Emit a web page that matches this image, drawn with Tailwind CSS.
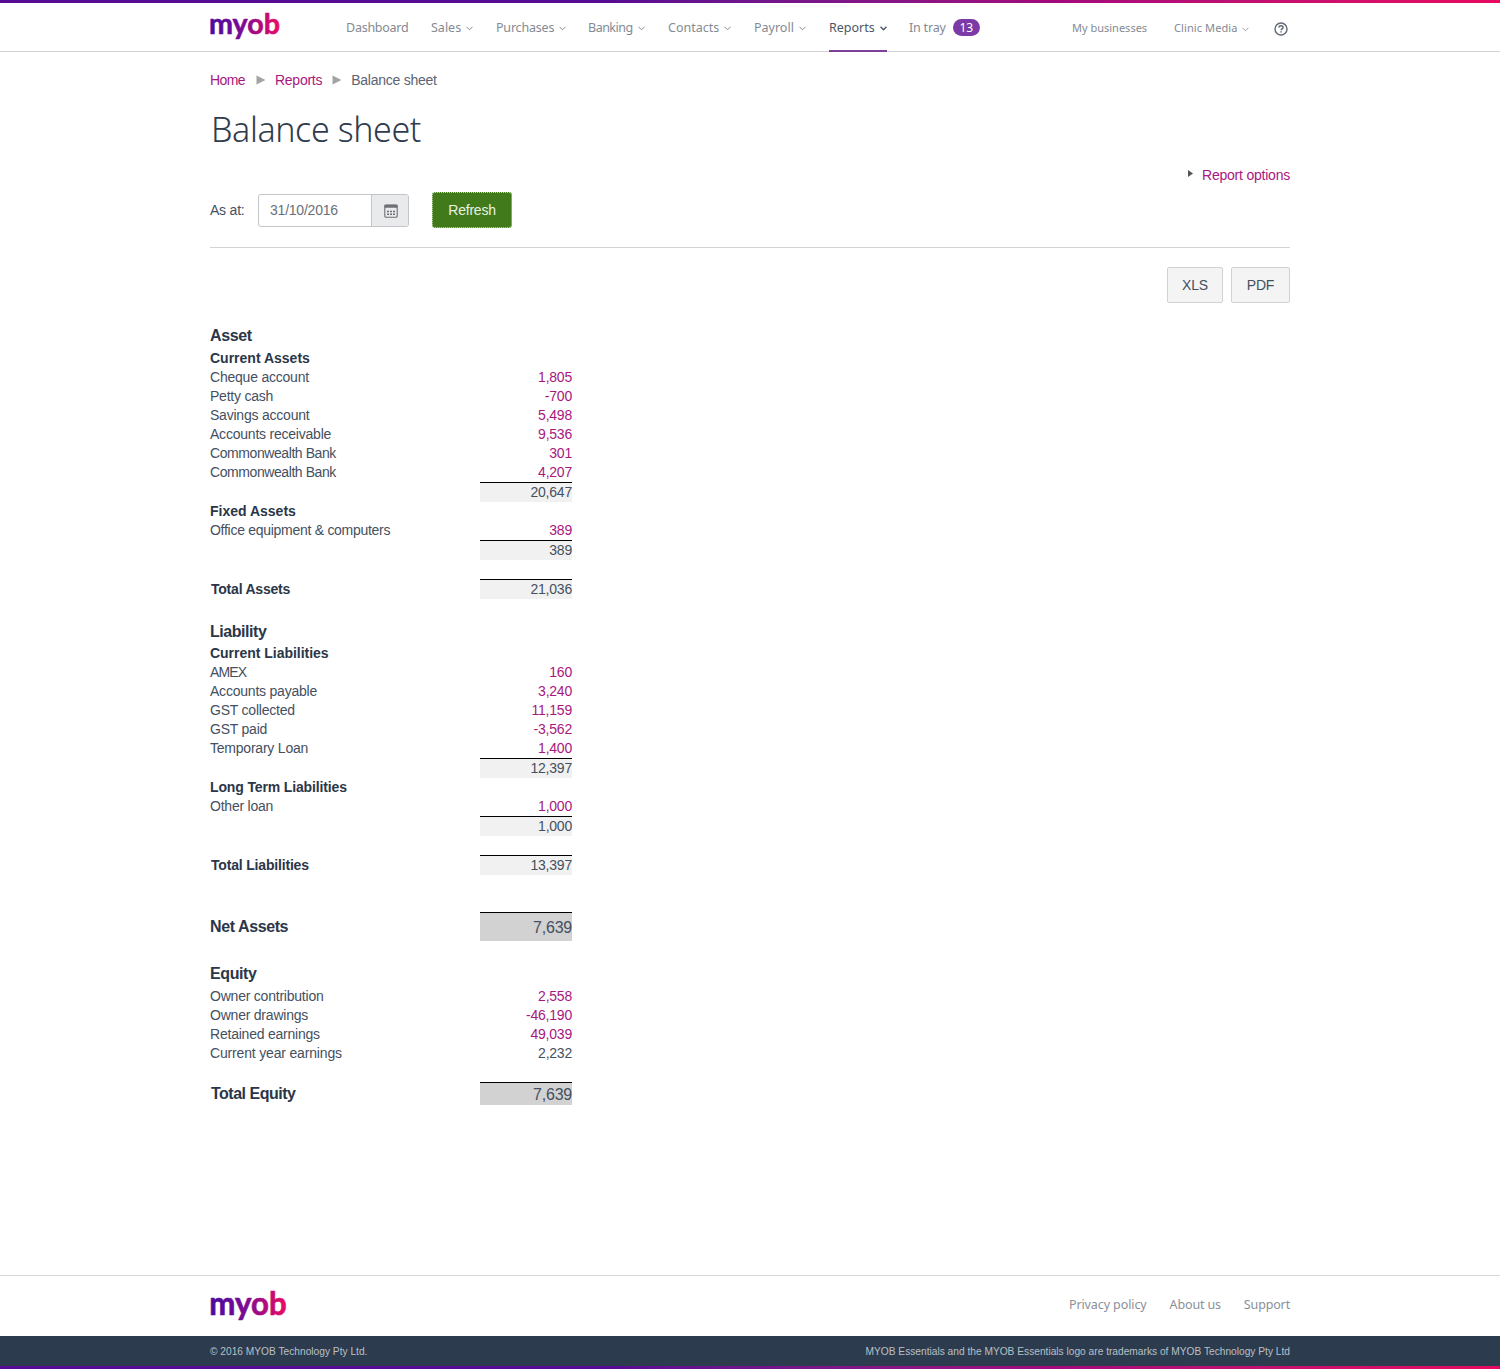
<!DOCTYPE html>
<html lang="en">
<head>
  <meta charset="utf-8">
  <title>Balance sheet</title>
  <script src="https://cdn.jsdelivr.net/npm/@tailwindcss/browser@4"></script>
</head>
<body class="bg-white font-['Liberation_Sans',sans-serif] text-[14px] leading-[19px] tracking-[-.22px] text-[#45505f]">
<div class="flex flex-col h-[1369px]">
  <div class="h-[3px] flex-none bg-linear-to-r from-[#570a93] from-40% via-[#a3087c] via-70% to-[#e8085f]"></div>

  <header class="h-[49px] flex-none border-b border-[#d3d3d6] font-['Noto_Sans',sans-serif] tracking-normal">
    <div class="w-[1080px] ml-[210px] h-[49px] flex">
      <svg class="w-[70px] h-[34px] mt-[8px] mr-[66px] flex-none overflow-visible" viewBox="0 0 70 34">
        <defs>
          <linearGradient id="brand" gradientUnits="userSpaceOnUse" x1="0" y1="0" x2="70" y2="0">
            <stop offset="0" stop-color="#4b0aa0"/>
            <stop offset=".45" stop-color="#7a0a94"/>
            <stop offset="1" stop-color="#ee0a62"/>
          </linearGradient>
        </defs>
        <text x="-1" y="23" textLength="71" lengthAdjust="spacingAndGlyphs" font-family="Lato, sans-serif" font-size="29" font-weight="700" fill="url(#brand)" stroke="url(#brand)" stroke-width=".6" stroke-linejoin="round">myob</text>
      </svg>
      <nav class="grid grid-cols-[85px_65px_92px_80px_86px_75px_80px_80px] text-[12.5px] leading-[50px] text-[#848a94] whitespace-nowrap">
        <a class="tracking-[-.25px]">Dashboard</a>
        <a>Sales<svg class="inline w-[7px] h-[5px] ml-[5px]" viewBox="0 0 7 5" fill="none" stroke="currentColor"><path d="M.5 .8l3 3 3-3"/></svg></a>
        <a class="tracking-[-.2px]">Purchases<svg class="inline w-[7px] h-[5px] ml-[5px]" viewBox="0 0 7 5" fill="none" stroke="currentColor"><path d="M.5 .8l3 3 3-3"/></svg></a>
        <a class="tracking-[-.5px]">Banking<svg class="inline w-[7px] h-[5px] ml-[5px]" viewBox="0 0 7 5" fill="none" stroke="currentColor"><path d="M.5 .8l3 3 3-3"/></svg></a>
        <a>Contacts<svg class="inline w-[7px] h-[5px] ml-[5px]" viewBox="0 0 7 5" fill="none" stroke="currentColor"><path d="M.5 .8l3 3 3-3"/></svg></a>
        <a>Payroll<svg class="inline w-[7px] h-[5px] ml-[5px]" viewBox="0 0 7 5" fill="none" stroke="currentColor"><path d="M.5 .8l3 3 3-3"/></svg></a>
        <a class="w-[58px] h-[49px] border-b-2 border-[#7d3f98] text-[#4d5665]">Reports<svg class="inline w-[7px] h-[5px] ml-[5px]" viewBox="0 0 7 5" fill="none" stroke="currentColor" stroke-width="1.4"><path d="M.5 .8l3 3 3-3"/></svg></a>
        <a class="flex items-center h-[49px] tracking-[-.2px]">In tray<span class="ml-[7px] w-[27px] h-[17px] rounded-full bg-[#7b3aa5] text-white text-[12px] leading-[17px] text-center">13</span></a>
      </nav>
      <div class="ml-auto flex text-[11px] leading-[50px] text-[#848a94] whitespace-nowrap">
        <a class="w-[102px]">My businesses</a>
        <a class="w-[100px] tracking-[.1px]">Clinic Media<svg class="inline w-[7px] h-[5px] ml-[4px]" viewBox="0 0 7 5" fill="none" stroke="currentColor" stroke-width=".8"><path d="M.5 .8l3 3 3-3"/></svg></a>
        <svg class="w-[14px] h-[14px] mt-[19px] mr-[2px]" viewBox="0 0 14 14" fill="none" stroke="#5f6875"><circle cx="7" cy="7" r="6" stroke-width="1.4"/><path d="M5 5.6C5 3.2 9 3.2 9 5.5 9 6.9 7.1 6.8 7.1 8.3M7.1 9.3v1.3" stroke-width="1.5"/></svg>
      </div>
    </div>
  </header>

  <main class="w-[1080px] ml-[210px] flex-1">
    <div class="flex items-center mt-[18px] h-5 tracking-[-.25px]">
      <a class="text-[#a8177d] tracking-[-.6px]">Home</a>
      <svg class="w-[10px] h-[10px] ml-[11px] mr-[9px]" viewBox="0 0 10 10" fill="#a3a3a3"><path d="M.5 .5l9 4.5-9 4.5z"/></svg>
      <a class="text-[#a8177d]">Reports</a>
      <svg class="w-[10px] h-[10px] ml-[10px] mr-[9px]" viewBox="0 0 10 10" fill="#a3a3a3"><path d="M.5 .5l9 4.5-9 4.5z"/></svg>
      <span class="text-[#5b6471]">Balance sheet</span>
    </div>
    <h1 class="mt-[18px] h-[42px] pl-px text-[34px] leading-[42px] tracking-[-.4px] font-light font-['Noto_Sans',sans-serif] text-[#303c4d] whitespace-nowrap">Balance sheet</h1>

    <div class="flex justify-end items-center mt-[15px] h-5">
      <svg class="w-[5px] h-[7px] mr-[9px] mb-[3px]" viewBox="0 0 5 7" fill="#555"><path d="M0 0l5 3.5L0 7z"/></svg>
      <a class="text-[#a8177d]">Report options</a>
    </div>
    <div class="flex items-center h-[36px] mt-[7px]">
      <label class="w-[48px]">As at:</label>
      <div class="flex w-[151px] h-[33px] border border-[#c4c5c9] rounded-[3px] overflow-hidden">
        <div class="flex-1 pl-[11px] leading-[31px] text-[#6a7079]">31/10/2016</div>
        <div class="w-[37px] bg-[#e9eaec] border-l border-[#c4c5c9] flex items-center justify-center">
          <svg class="w-[14px] h-[14px] mt-px ml-[2px]" viewBox="0 0 14 14" fill="none" stroke="#6c6f76"><rect x=".8" y="1" width="12.4" height="12.2" rx="1.3" stroke-width="1.1"/><path d="M.5 2.2h13" stroke-width="3"/><path d="M3 7.5h8M3 10.2h8" stroke-width="1.6" stroke-dasharray="2 1"/></svg>
        </div>
      </div>
      <button class="ml-[23px] w-[80px] h-[36px] rounded-[3px] bg-[#417a1b] border border-dotted border-[#c5dcae] text-[#e9f2e2]">Refresh</button>
    </div>
    <div class="mt-[19px] border-t border-[#d3d3d6]"></div>
    <div class="flex justify-end gap-[8px] mt-[19px]">
      <button class="w-[56px] h-[36px] rounded-[2px] bg-[#f4f4f4] border border-[#d2d2d4]">XLS</button>
      <button class="w-[59px] h-[36px] rounded-[2px] bg-[#f4f4f4] border border-[#d2d2d4]">PDF</button>
    </div>

    <table class="mt-[23px] w-[362px] table-fixed border-collapse [&_td]:p-0 [&_td]:text-right [&_th]:p-0 [&_th]:text-left [&_th]:font-normal [&_a]:text-[#a8177d] [&_b]:text-[#2b3648]">
      <colgroup><col class="w-[270px]"><col class="w-[92px]"></colgroup>
      <tr class="h-[23px] text-[16px]"><th class="align-top"><b class="tracking-[-.4px]">Asset</b></th><td></td></tr>
      <tr class="h-[19px]"><th class="align-bottom"><b class="tracking-[0px]">Current Assets</b></th><td></td></tr>
      <tr class="h-[19px]"><th>Cheque account</th><td><a>1,805</a></td></tr>
      <tr class="h-[19px]"><th>Petty cash</th><td><a>-700</a></td></tr>
      <tr class="h-[19px]"><th>Savings account</th><td><a>5,498</a></td></tr>
      <tr class="h-[19px]"><th>Accounts receivable</th><td><a>9,536</a></td></tr>
      <tr class="h-[19px]"><th class="tracking-[-.42px]">Commonwealth Bank</th><td><a>301</a></td></tr>
      <tr class="h-[19px]"><th class="tracking-[-.42px]">Commonwealth Bank</th><td><a>4,207</a></td></tr>
      <tr class="h-[20px]"><th></th><td><div class="h-[20px] border-t border-black bg-[#f1f1f1]">20,647</div></td></tr>
      <tr class="h-[19px]"><th><b class="tracking-[0px]">Fixed Assets</b></th><td></td></tr>
      <tr class="h-[19px]"><th class="tracking-[-.28px]">Office equipment &amp; computers</th><td><a>389</a></td></tr>
      <tr class="h-[20px]"><th></th><td><div class="h-[20px] border-t border-black bg-[#f1f1f1]">389</div></td></tr>
      <tr class="h-[19px]"><th></th><td></td></tr>
      <tr class="h-[20px]"><th class="pl-px!"><b>Total Assets</b></th><td><div class="h-[20px] border-t border-black bg-[#f1f1f1]">21,036</div></td></tr>
      <tr class="h-[19px]"><th></th><td></td></tr>
      <tr class="h-[26px] text-[16px]"><th><b class="tracking-[-.45px]">Liability</b></th><td></td></tr>
      <tr class="h-[19px]"><th><b class="tracking-[-.02px]">Current Liabilities</b></th><td></td></tr>
      <tr class="h-[19px]"><th class="tracking-[-.9px]">AMEX</th><td><a>160</a></td></tr>
      <tr class="h-[19px]"><th>Accounts payable</th><td><a>3,240</a></td></tr>
      <tr class="h-[19px]"><th>GST collected</th><td><a>11,159</a></td></tr>
      <tr class="h-[19px]"><th>GST paid</th><td><a>-3,562</a></td></tr>
      <tr class="h-[19px]"><th>Temporary Loan</th><td><a>1,400</a></td></tr>
      <tr class="h-[20px]"><th></th><td><div class="h-[20px] border-t border-black bg-[#f1f1f1]">12,397</div></td></tr>
      <tr class="h-[19px]"><th><b class="tracking-[-.14px]">Long Term Liabilities</b></th><td></td></tr>
      <tr class="h-[19px]"><th>Other loan</th><td><a>1,000</a></td></tr>
      <tr class="h-[20px]"><th></th><td><div class="h-[20px] border-t border-black bg-[#f1f1f1]">1,000</div></td></tr>
      <tr class="h-[19px]"><th></th><td></td></tr>
      <tr class="h-[20px]"><th class="pl-px!"><b class="tracking-[-.18px]">Total Liabilities</b></th><td><div class="h-[20px] border-t border-black bg-[#f1f1f1]">13,397</div></td></tr>
      <tr class="h-[37px]"><th></th><td></td></tr>
      <tr class="h-[29px] text-[16px]"><th><b class="tracking-[-.4px]">Net Assets</b></th><td><div class="h-[29px] leading-[30px] border-t border-black bg-[#d2d2d2]">7,639</div></td></tr>
      <tr class="h-[19px]"><th></th><td></td></tr>
      <tr class="h-[27px] text-[16px]"><th><b class="tracking-[-.4px]">Equity</b></th><td></td></tr>
      <tr class="h-[19px]"><th>Owner contribution</th><td><a>2,558</a></td></tr>
      <tr class="h-[19px]"><th>Owner drawings</th><td><a>-46,190</a></td></tr>
      <tr class="h-[19px]"><th>Retained earnings</th><td><a>49,039</a></td></tr>
      <tr class="h-[19px]"><th class="tracking-[-.17px]">Current year earnings</th><td>2,232</td></tr>
      <tr class="h-[19px]"><th></th><td></td></tr>
      <tr class="h-[23px] text-[16px]"><th class="pl-px!"><b class="tracking-[-.5px]">Total Equity</b></th><td><div class="h-[23px] leading-[23px] border-t border-black bg-[#d2d2d2]">7,639</div></td></tr>
    </table>
  </main>

  <footer class="flex-none tracking-normal">
    <div class="h-[61px] border-t border-[#d8d8da]">
      <div class="w-[1080px] ml-[210px] flex">
        <svg class="w-[77px] h-[37px] mt-[14px] overflow-visible" viewBox="0 0 70 34"><text x="-1" y="23" textLength="71" lengthAdjust="spacingAndGlyphs" font-family="Lato, sans-serif" font-size="29" font-weight="700" fill="url(#brand)" stroke="url(#brand)" stroke-width=".6" stroke-linejoin="round">myob</text></svg>
        <div class="ml-auto flex gap-[23px] font-['Noto_Sans',sans-serif] text-[12.5px] leading-[58px] tracking-[-.15px] text-[#8a8f98]">
          <a class="tracking-[-.1px]">Privacy policy</a>
          <a>About us</a>
          <a>Support</a>
        </div>
      </div>
    </div>
    <div class="h-[30px] bg-[#2c3b4d] text-[#b9c0c8] text-[10.2px] leading-[31px]">
      <div class="w-[1080px] ml-[210px] flex justify-between">
        <span>© 2016 MYOB Technology Pty Ltd.</span>
        <span>MYOB Essentials and the MYOB Essentials logo are trademarks of MYOB Technology Pty Ltd</span>
      </div>
    </div>
    <div class="h-[3px] bg-linear-to-r from-[#570a93] from-40% via-[#a3087c] via-70% to-[#e8085f]"></div>
  </footer>
</div>
</body>
</html>
